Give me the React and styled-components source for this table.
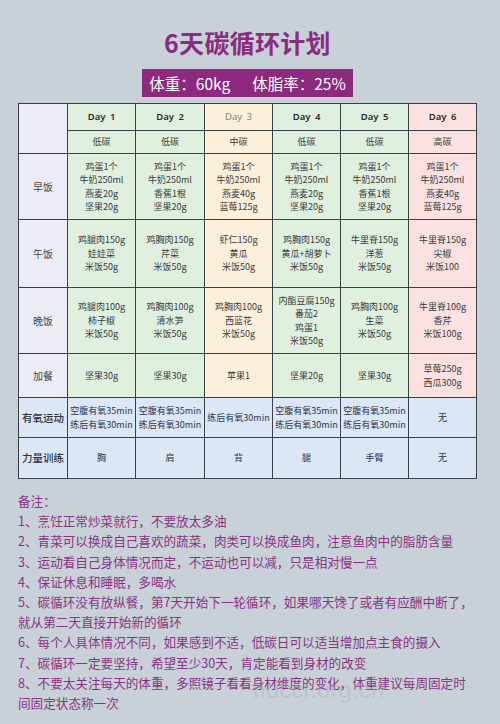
import React from "react";
import styled, { createGlobalStyle } from "styled-components";

const Global = createGlobalStyle`
  html, body { margin: 0; padding: 0; background: #c7d1d7; }
  body { font-family: "Noto Sans CJK SC", "Noto Sans", sans-serif; }
`;

const Page = styled.div`
  position: relative;
  width: 500px;
  height: 724px;
  overflow: hidden;
  background: #c7d1d7;
  padding: 27px 0 0 18px;
  box-sizing: border-box;
  display: flex;
  flex-direction: column;
`;

const Header = styled.div`
  width: 459px;
  display: flex;
  flex-direction: column;
  align-items: center;
`;

const Title = styled.h1`
  margin: 0;
  font-size: 25px;
  line-height: 30px;
  font-weight: 700;
  color: #8a2c7f;
  letter-spacing: 0.3px;
`;

const Badge = styled.div`
  margin-top: 12px;
  height: 28px;
  padding: 0 7px;
  background: #8d2a80;
  color: #fff;
  font-size: 15.5px;
  line-height: 28px;
  display: flex;
  gap: 22px;
`;

const Grid = styled.div`
  margin-top: 6px;
  width: 459px;
  box-sizing: border-box;
  display: grid;
  grid-template-columns: 48px 67px 68px 67px 67px 67px 67px;
  grid-template-rows: 26px 22px 65px 67px 65px 43px 39px 40px;
  gap: 1px;
  padding: 1px;
  background: #3b4048;
`;

const bgMap = {
  label: "#ececf4",
  green: "#dff0df",
  cream: "#fdf0db",
  pink: "#fbe2e1",
  blue: "#dce7f5",
};

const Cell = styled.div`
  background: ${(p) => bgMap[p.$tone]};
  display: flex;
  flex-direction: column;
  align-items: center;
  justify-content: center;
  text-align: center;
  font-size: 9px;
  line-height: 13.5px;
  color: ${(p) => (p.$tone === "blue" ? "#2c3552" : "#3a3a3a")};
  white-space: nowrap;
  ${(p) => p.$span && `grid-row: span ${p.$span};`}
`;

const DayText = styled.span`
  font-size: 9.5px;
  font-weight: ${(p) => (p.$muted ? 400 : 600)};
  color: ${(p) => (p.$muted ? "#8a8070" : "#2a2a2a")};
  font-family: "Noto Sans", "Noto Sans CJK SC", sans-serif;
  word-spacing: 2px;
`;

const LabelText = styled.span`
  font-size: ${(p) => (p.$strong ? "10.5px" : "10px")};
  font-weight: ${(p) => (p.$strong ? 500 : 400)};
  color: ${(p) => (p.$strong ? "#2e3444" : "#454545")};
`;

const Notes = styled.div`
  margin-top: 12px;
  font-size: 12.6px;
  line-height: 20.2px;
  color: #8b3383;
`;

const NoteLine = styled.div`
  white-space: nowrap;
`;

const Watermark = styled.div`
  position: absolute;
  left: 253px;
  top: 677px;
  font-family: "Liberation Sans", sans-serif;
  font-size: 23px;
  color: rgba(160, 170, 178, 0.35);
  letter-spacing: 0.5px;
  pointer-events: none;
`;

const days = [
  { name: "Day 1", type: "低碳", tone: "green" },
  { name: "Day 2", type: "低碳", tone: "green" },
  { name: "Day 3", type: "中碳", tone: "cream", muted: true },
  { name: "Day 4", type: "低碳", tone: "green" },
  { name: "Day 5", type: "低碳", tone: "green" },
  { name: "Day 6", type: "高碳", tone: "pink" },
];

const rows = [
  {
    label: "早饭",
    cells: [
      ["鸡蛋1个", "牛奶250ml", "燕麦20g", "坚果20g"],
      ["鸡蛋1个", "牛奶250ml", "香蕉1根", "坚果20g"],
      ["鸡蛋1个", "牛奶250ml", "燕麦40g", "蓝莓125g"],
      ["鸡蛋1个", "牛奶250ml", "燕麦20g", "坚果20g"],
      ["鸡蛋1个", "牛奶250ml", "香蕉1根", "坚果20g"],
      ["鸡蛋1个", "牛奶250ml", "燕麦40g", "蓝莓125g"],
    ],
  },
  {
    label: "午饭",
    cells: [
      ["鸡腿肉150g", "娃娃菜", "米饭50g"],
      ["鸡胸肉150g", "芹菜", "米饭50g"],
      ["虾仁150g", "黄瓜", "米饭50g"],
      ["鸡胸肉150g", "黄瓜+胡萝卜", "米饭50g"],
      ["牛里脊150g", "洋葱", "米饭50g"],
      ["牛里脊150g", "尖椒", "米饭100"],
    ],
  },
  {
    label: "晚饭",
    cells: [
      ["鸡腿肉100g", "柿子椒", "米饭50g"],
      ["鸡胸肉100g", "清水笋", "米饭50g"],
      ["鸡胸肉100g", "西蓝花", "米饭50g"],
      ["内酯豆腐150g", "番茄2", "鸡蛋1", "米饭50g"],
      ["鸡胸肉100g", "生菜", "米饭50g"],
      ["牛里脊100g", "香芹", "米饭100g"],
    ],
  },
  {
    label: "加餐",
    cells: [["坚果30g"], ["坚果30g"], ["苹果1"], ["坚果20g"], ["坚果30g"], ["草莓250g", "西瓜300g"]],
  },
  {
    label: "有氧运动",
    strong: true,
    blue: true,
    cells: [
      ["空腹有氧35min", "练后有氧30min"],
      ["空腹有氧35min", "练后有氧30min"],
      ["练后有氧30min"],
      ["空腹有氧35min", "练后有氧30min"],
      ["空腹有氧35min", "练后有氧30min"],
      ["无"],
    ],
  },
  {
    label: "力量训练",
    strong: true,
    blue: true,
    cells: [["胸"], ["肩"], ["背"], ["腿"], ["手臂"], ["无"]],
  },
];

const notes = [
  "备注：",
  "1、烹饪正常炒菜就行，不要放太多油",
  "2、青菜可以换成自己喜欢的蔬菜，肉类可以换成鱼肉，注意鱼肉中的脂肪含量",
  "3、运动看自己身体情况而定，不运动也可以减，只是相对慢一点",
  "4、保证休息和睡眠，多喝水",
  "5、碳循环没有放纵餐，第7天开始下一轮循环，如果哪天馋了或者有应酬中断了，",
  "就从第二天直接开始新的循环",
  "6、每个人具体情况不同，如果感到不适，低碳日可以适当增加点主食的摄入",
  "7、碳循环一定要坚持，希望至少30天，肯定能看到身材的改变",
  "8、不要太关注每天的体重，多照镜子看看身材维度的变化，体重建议每周固定时",
  "间固定状态称一次",
];

export default function App() {
  return (
    <Page>
      <Global />
      <Header>
        <Title>6天碳循环计划</Title>
        <Badge>
          <span>体重：60kg</span>
          <span>体脂率：25%</span>
        </Badge>
      </Header>
      <Grid>
        <Cell $tone="label" $span={2} />
        {days.map((d) => (
          <Cell key={d.name} $tone={d.tone}>
            <DayText $muted={d.muted}>{d.name}</DayText>
          </Cell>
        ))}
        {days.map((d) => (
          <Cell key={d.name + "t"} $tone={d.tone}>
            {d.type}
          </Cell>
        ))}
        {rows.map((r) => (
          <React.Fragment key={r.label}>
            <Cell $tone={r.blue ? "blue" : "label"}>
              <LabelText $strong={r.strong}>{r.label}</LabelText>
            </Cell>
            {r.cells.map((lines, i) => (
              <Cell key={i} $tone={r.blue ? "blue" : days[i].tone}>
                {lines.map((l, j) => (
                  <span key={j}>{l}</span>
                ))}
              </Cell>
            ))}
          </React.Fragment>
        ))}
      </Grid>
      <Notes>
        {notes.map((n, i) => (
          <NoteLine key={i}>{n}</NoteLine>
        ))}
      </Notes>
      <Watermark>hdccr.org.cn</Watermark>
    </Page>
  );
}
